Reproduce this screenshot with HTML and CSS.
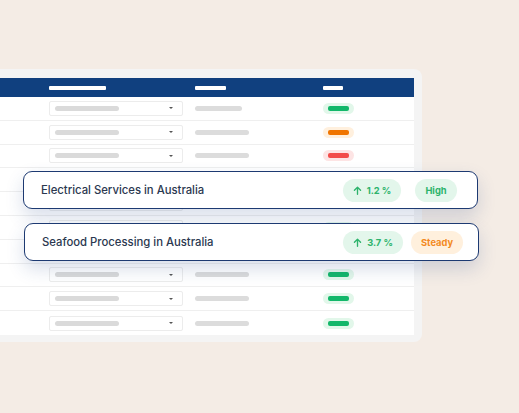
FILE: index.html
```html
<!DOCTYPE html>
<html lang="en">
<head>
    <meta charset="UTF-8">
    <meta name="viewport" content="width=device-width, initial-scale=1.0">
    <title>Industry Outlook</title>
    <link rel="stylesheet" href="styles.css">
</head>
<body>
    <div class="stage">
        <div class="panel">
            <div class="table">
                <div class="head">
                    <span></span>
                    <span><i class="hbar w57"></i></span>
                    <span><i class="hbar w31"></i></span>
                    <span><i class="hbar w20"></i></span>
                </div>
                <div class="row"><span></span><span class="select"><i class="ph"></i><b class="caret"></b></span><span><i class="line short"></i></span><span class="dot green"><i></i></span></div>
                <div class="row"><span></span><span class="select"><i class="ph"></i><b class="caret"></b></span><span><i class="line"></i></span><span class="dot orange"><i></i></span></div>
                <div class="row"><span></span><span class="select"><i class="ph"></i><b class="caret"></b></span><span><i class="line"></i></span><span class="dot red"><i></i></span></div>
                <div class="row"><span></span><span class="select"><i class="ph"></i><b class="caret"></b></span><span><i class="line"></i></span><span class="dot green"><i></i></span></div>
                <div class="row"><span></span><span class="select"><i class="ph"></i><b class="caret"></b></span><span><i class="line"></i></span><span class="dot green"><i></i></span></div>
                <div class="row"><span></span><span class="select"><i class="ph"></i><b class="caret"></b></span><span><i class="line"></i></span><span class="dot green"><i></i></span></div>
                <div class="row"><span></span><span class="select"><i class="ph"></i><b class="caret"></b></span><span><i class="line"></i></span><span class="dot green"><i></i></span></div>
                <div class="row"><span></span><span class="select"><i class="ph"></i><b class="caret"></b></span><span><i class="line"></i></span><span class="dot green"><i></i></span></div>
                <div class="row"><span></span><span class="select"><i class="ph"></i><b class="caret"></b></span><span><i class="line"></i></span><span class="dot green"><i></i></span></div>
                <div class="row"><span></span><span class="select"><i class="ph"></i><b class="caret"></b></span><span><i class="line"></i></span><span class="dot green"><i></i></span></div>
            </div>
        </div>

        <div class="card card-one">
            <span class="name">Electrical Services in Australia</span>
            <span class="tag tag-green">
                <svg width="9" height="9" viewBox="0 0 10 10"><path d="M5 9.2V1.5M1.6 4.8L5 1.4l3.4 3.4" fill="none" stroke="currentColor" stroke-width="1.5" stroke-linecap="round" stroke-linejoin="round"/></svg>
                1.2 %
            </span>
            <span class="tag tag-green">High</span>
        </div>

        <div class="card card-two">
            <span class="name">Seafood Processing in Australia</span>
            <span class="tag tag-green">
                <svg width="9" height="9" viewBox="0 0 10 10"><path d="M5 9.2V1.5M1.6 4.8L5 1.4l3.4 3.4" fill="none" stroke="currentColor" stroke-width="1.5" stroke-linecap="round" stroke-linejoin="round"/></svg>
                3.7 %
            </span>
            <span class="tag tag-orange">Steady</span>
        </div>
    </div>
</body>
</html>
```

FILE: styles.css
```css
body {
    margin: 0;
    background-color: #f4ece5;
    font-family: 'Inter', 'Noto Sans', sans-serif;
    overflow: hidden;
}
.stage {
    position: relative;
    height: 413px;
    padding-top: 69px;
    box-sizing: border-box;
}
.panel {
    margin-left: -8px;
    width: 414px;
    padding: 9px 8px 7px 8px;
    background-color: #f4f4f4;
    border-radius: 0 8px 8px 0;
}
.table {
    background: white;
}
.head,
.row {
    display: grid;
    grid-template-columns: 49px 146px 128px 1fr;
    align-items: center;
}
.head {
    height: 19px;
    background-color: #10407f;
}
.hbar {
    display: block;
    height: 4px;
    background: white;
    border-radius: 1px;
}
.w57 { width: 57px; }
.w31 { width: 31px; }
.w20 { width: 20px; }
.row {
    height: 23.8px;
    box-sizing: border-box;
    border-bottom: 1px solid #efefef;
}
.row:last-child {
    border-bottom: none;
}
.select {
    display: flex;
    align-items: center;
    justify-content: space-between;
    width: 134px;
    height: 15px;
    box-sizing: border-box;
    padding: 0 9px 0 5px;
    border: 1px solid #ececec;
    border-radius: 2px;
}
.ph {
    display: block;
    width: 64px;
    height: 5px;
    border-radius: 3px;
    background: #dadada;
}
.caret {
    width: 0;
    height: 0;
    border-left: 2px solid transparent;
    border-right: 2px solid transparent;
    border-top: 2px solid #555;
}
.line {
    display: block;
    width: 54px;
    height: 5px;
    border-radius: 3px;
    background: #dcdcdc;
}
.line.short {
    width: 47px;
}
.dot {
    display: flex;
    align-items: center;
    justify-content: center;
    width: 31px;
    height: 11px;
    border-radius: 6px;
}
.dot i {
    display: block;
    width: 21px;
    height: 5px;
    border-radius: 2px;
}
.dot.green { background: #e2f7ea; }
.dot.green i { background: #13b76a; }
.dot.orange { background: #fff0de; }
.dot.orange i { background: #f07500; }
.dot.red { background: #fde4e4; }
.dot.red i { background: #f24c4a; }

/* floating cards */
.card {
    position: absolute;
    display: grid;
    grid-template-columns: 1fr 68px 60px;
    align-items: center;
    justify-items: center;
    width: 455px;
    height: 38px;
    box-sizing: border-box;
    padding: 0 11px 0 17px;
    background: white;
    border: 1.5px solid #1d3a72;
    border-radius: 9px;
    box-shadow: 0 8px 18px rgba(40, 70, 140, 0.18);
}
.card-one {
    top: 171px;
    left: 23px;
}
.card-two {
    top: 223px;
    left: 24px;
}
.name {
    justify-self: start;
    font-size: 11.3px;
    font-weight: 500;
    color: #2b3850;
}
.tag {
    display: inline-flex;
    align-items: center;
    gap: 5px;
    height: 23px;
    padding: 0 10px;
    border-radius: 12px;
    font-size: 9.3px;
    font-weight: 700;
    white-space: nowrap;
}
.tag-green {
    background: #e3f6eb;
    color: #2db36c;
}
.tag-orange {
    background: #fff0dd;
    color: #f38a22;
}
```
